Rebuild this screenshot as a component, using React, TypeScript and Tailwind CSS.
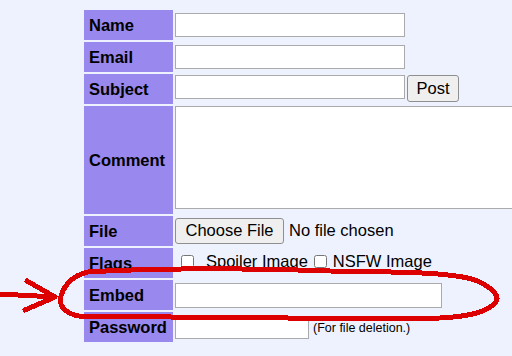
import React from "react";

const font = { fontFamily: '"Liberation Sans", Arial, sans-serif' };

const Label = ({ text, tall }: { text: string; tall?: boolean }) => (
  <div
    className={`w-[89px] shrink-0 bg-[#9988ee] pl-[5px] flex items-center font-bold text-[16.5px] text-black ${tall ? "h-[108px]" : "h-[30px]"}`}
  >
    {text}
  </div>
);

const TextInput = ({ w, h = 24 }: { w: number; h?: number }) => (
  <input
    type="text"
    className="bg-white border border-[#aaaaaa] outline-none"
    style={{ width: w, height: h }}
  />
);

const NativeButton = ({ children, className }: { children: React.ReactNode; className: string }) => (
  <button
    type="button"
    className={`bg-[#efefef] border border-[#8f8f8f] rounded-[3px] text-[16.5px] text-black flex items-center justify-center ${className}`}
  >
    {children}
  </button>
);

export default function App() {
  return (
    <div className="relative w-full h-[356px] overflow-hidden bg-[#eef2ff]" style={font}>
      <form className="flex flex-col gap-[2px] pt-[10px] pl-[84px]">
        {/* Name */}
        <div className="flex gap-[2px] items-center">
          <Label text="Name" />
          <TextInput w={230} />
        </div>

        {/* Email */}
        <div className="flex gap-[2px] items-center">
          <Label text="Email" />
          <TextInput w={230} />
        </div>

        {/* Subject + Post */}
        <div className="flex gap-[2px]">
          <Label text="Subject" />
          <div className="flex items-start gap-[2px] pt-[1px]">
            <TextInput w={230} />
            <NativeButton className="w-[52px] h-[27px]">Post</NativeButton>
          </div>
        </div>

        {/* Comment */}
        <div className="flex gap-[2px]">
          <Label text="Comment" tall />
          <textarea className="w-[360px] h-[103px] shrink-0 bg-white border border-[#aaaaaa] outline-none resize-none" />
        </div>

        {/* File */}
        <div className="flex gap-[2px]">
          <Label text="File" />
          <div className="flex items-center gap-[5px] pt-[1px] h-[28px] text-[16.5px] text-black">
            <NativeButton className="w-[109px] h-[26px]">Choose File</NativeButton>
            <span>No file chosen</span>
          </div>
        </div>

        {/* Flags */}
        <div className="flex gap-[2px] items-center">
          <Label text="Flags" />
          <div className="flex items-center text-[16.5px] text-black pb-[3px]">
            <input type="checkbox" className="m-0 ml-[6px] w-[13px] h-[13px]" />
            <span className="ml-[12px]">Spoiler Image</span>
            <input type="checkbox" className="m-0 ml-[6px] w-[13px] h-[13px]" />
            <span className="ml-[6px]">NSFW Image</span>
          </div>
        </div>

        {/* Embed */}
        <div className="flex gap-[2px] items-center">
          <Label text="Embed" />
          <TextInput w={267} h={25} />
        </div>

        {/* Password */}
        <div className="flex gap-[2px] items-center">
          <Label text="Password" />
          <div className="flex items-center gap-[4px] pt-[2px]">
            <TextInput w={134} h={21} />
            <span className="text-[12.5px] text-black">(For file deletion.)</span>
          </div>
        </div>
      </form>

      {/* hand-drawn red annotation */}
      <svg
        className="absolute left-0 top-0 pointer-events-none"
        width="512"
        height="356"
        viewBox="0 0 512 356"
        fill="none"
        stroke="#dd0000"
        strokeWidth="5"
        strokeLinejoin="round"
        strokeLinecap="round"
        shapeRendering="crispEdges"
      >
        <path d="M 88 272 C 150 268, 250 268, 330 271 C 400 272, 450 272, 475 280 C 492 287, 500 296, 496 302 C 488 311, 475 316, 440 318 C 350 320, 200 316, 90 317 C 66 317, 58 306, 61 296 C 65 283, 75 275, 88 272 Z" />
        <path d="M 0 294 L 55 297" />
        <path d="M 27 281 L 55 297 L 25 310" />
      </svg>
    </div>
  );
}
